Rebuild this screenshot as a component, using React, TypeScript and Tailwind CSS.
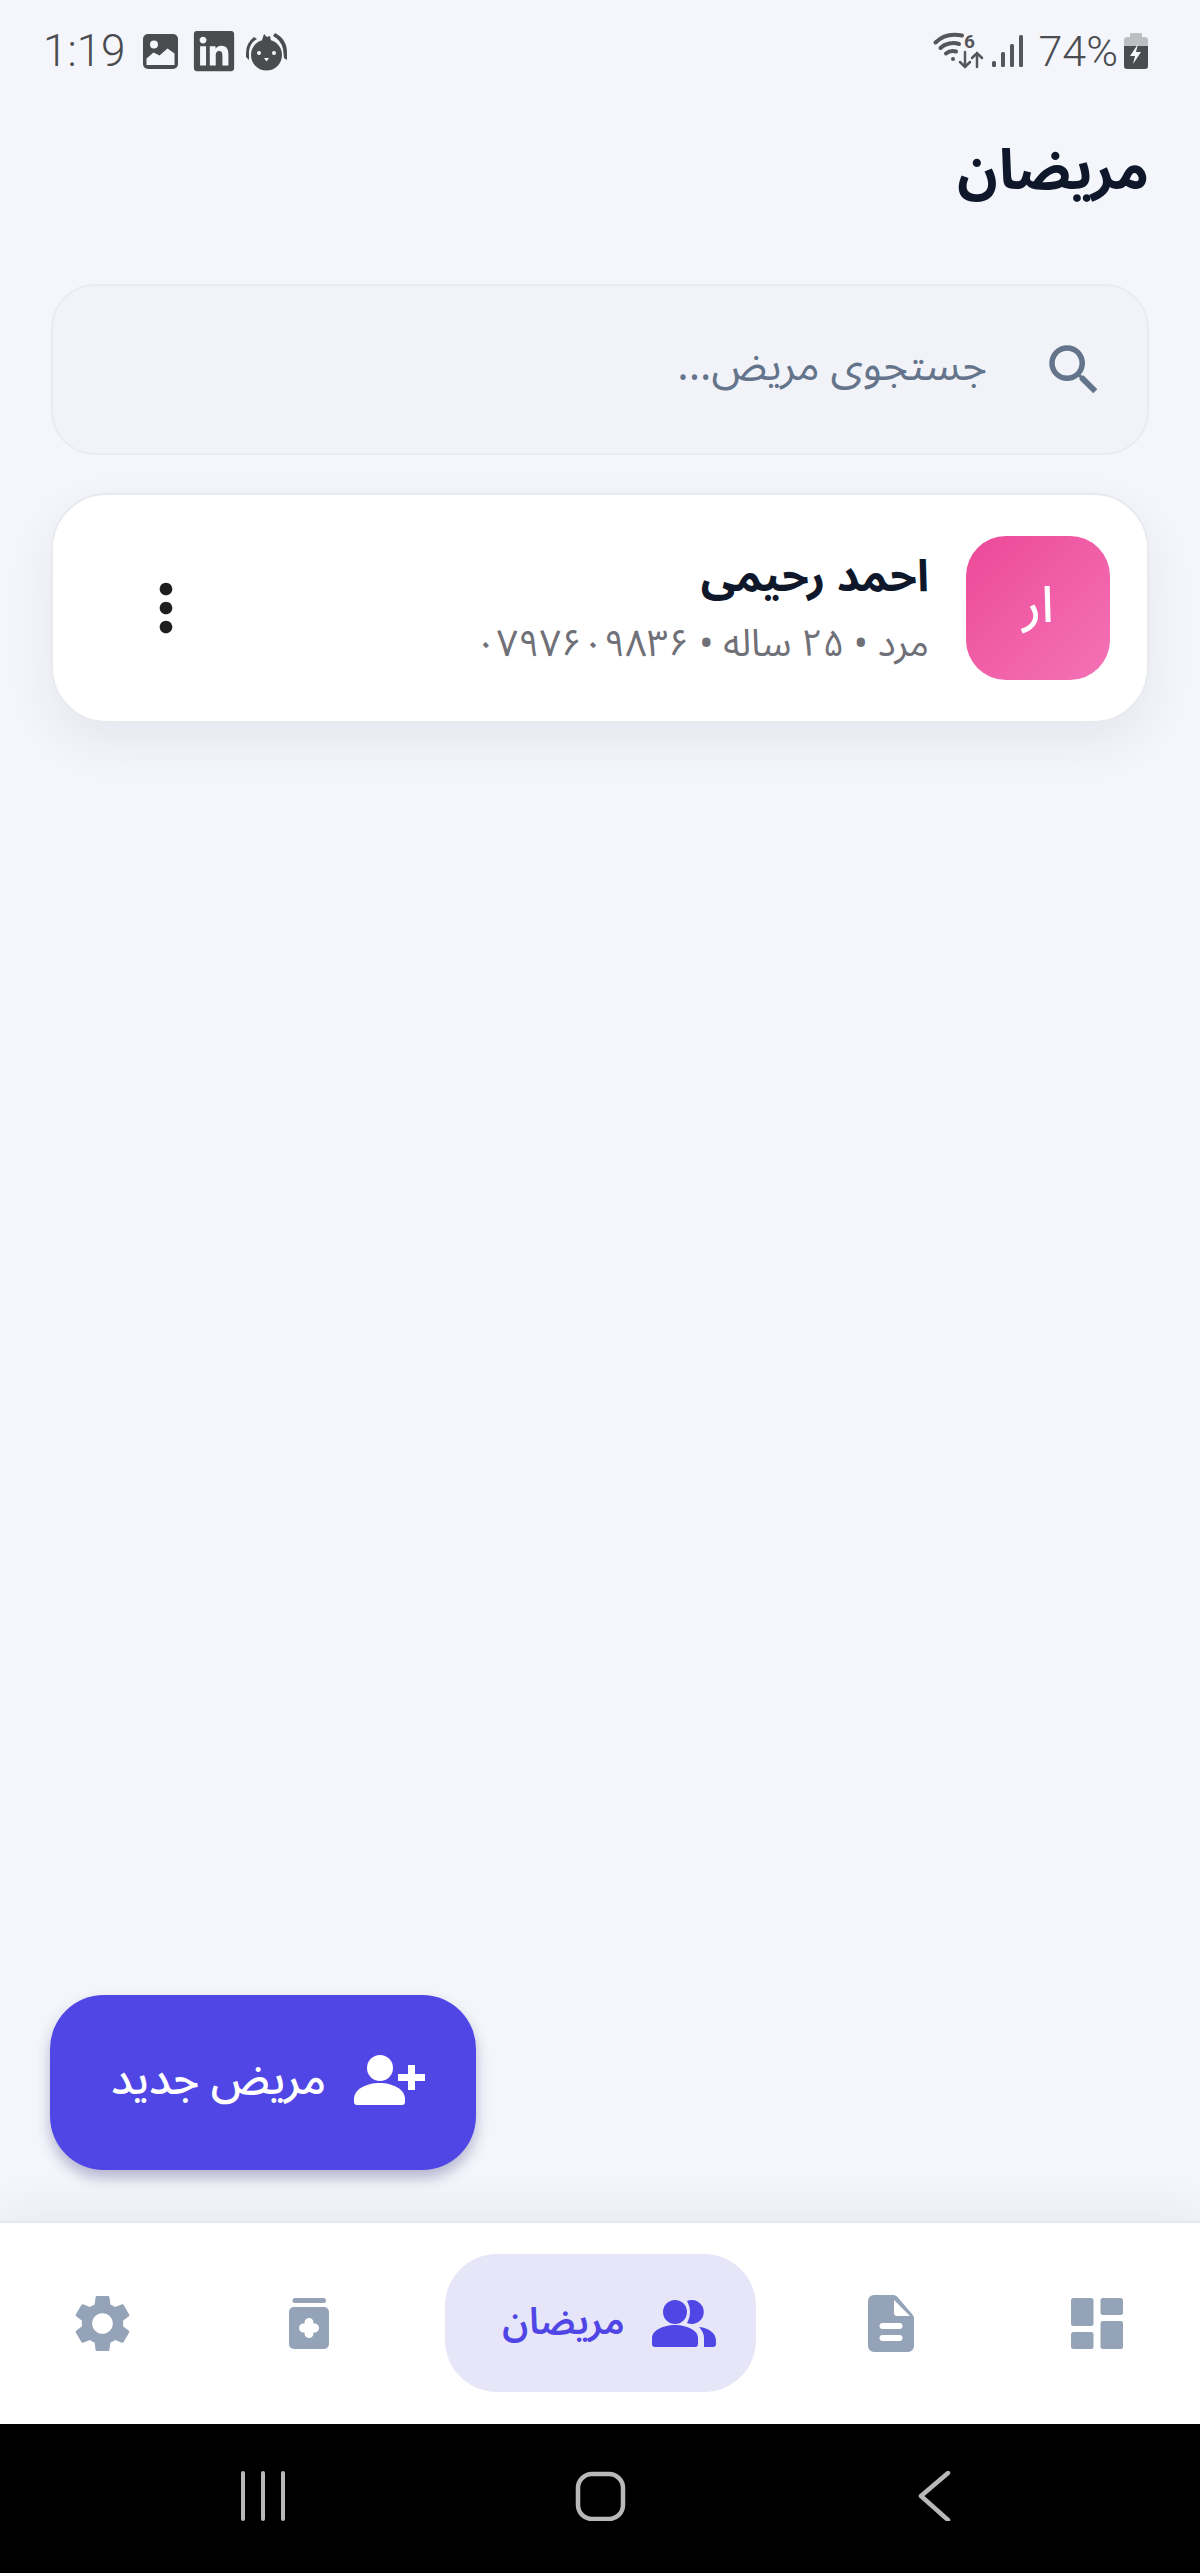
import { MdMoreVert, MdSearch, MdSettings } from 'react-icons/md'
import { FaLinkedin } from 'react-icons/fa'

function ImageNotifIcon() {
  return (
    <svg viewBox="0 0 35 35" className="h-[35px] w-[35px]" fill="#4a4c50">
      <path d="M5 0h25a5 5 0 0 1 5 5v25a5 5 0 0 1-5 5H5a5 5 0 0 1-5-5V5a5 5 0 0 1 5-5Z" />
      <circle cx="11" cy="10.5" r="4" fill="#f5f6fb" />
      <path d="M3.5 31v-6.5l7-6 6 3 8-7 7 5V31Z" fill="#f5f6fb" />
    </svg>
  )
}

function BirdIcon() {
  return (
    <svg viewBox="0 0 43 40" className="h-[40px] w-[43px]" fill="#4a4c50">
      <circle cx="21.5" cy="24" r="15.5" />
      <path d="M17 9l2-6 3 3 3-1 1 5Z" />
      <path d="M9 6 Q1 12 1 22 L1 26 L4 29 L4 20 Q5 12 12 8Z" />
      <path d="M30 2 Q42 8 42 22 L42 29 L39 27 L38 18 Q36 9 28 5Z" />
      <circle cx="14" cy="22" r="2" fill="#f5f6fb" />
      <circle cx="29" cy="22" r="2" fill="#f5f6fb" />
      <path d="M19 27h5l-2.5 3.5Z" fill="#f5f6fb" />
    </svg>
  )
}

function WifiIcon() {
  return (
    <svg viewBox="0 0 48 38" className="h-[38px] w-[48px] overflow-visible" fill="none" stroke="#55575b" strokeLinecap="round">
      <path d="M1.5 10.5C8 4 18 1.500 28 3.500" strokeWidth="4" />
      <path d="M6.500 16C11 11.500 19 10 25 12" strokeWidth="4" />
      <path d="M12 21.500C15 19 19 18.500 22 19.500" strokeWidth="4" />
      <circle cx="19" cy="27" r="2" fill="#55575b" stroke="none" />
      <text x="30" y="16" fontSize="19" fontWeight="700" fill="#55575b" stroke="none" fontFamily="Roboto, sans-serif">6</text>
      <path d="M31 20v15M26 30l5 5 5-5" strokeWidth="2.500" />
      <path d="M43 35V21M38 26l5-5 5 5" strokeWidth="2.500" />
    </svg>
  )
}

function SignalIcon() {
  return (
    <svg viewBox="0 0 32 32" className="h-[32px] w-[32px]" fill="#55575b">
      <rect x="0" y="26" width="4" height="6" rx="1.500" />
      <rect x="9" y="17" width="4" height="15" rx="1.500" />
      <rect x="18" y="9" width="4" height="23" rx="1.500" />
      <rect x="27" y="0" width="4" height="32" rx="1.500" />
    </svg>
  )
}

function BatteryIcon() {
  return (
    <svg viewBox="0 0 24 36" className="h-[36px] w-[24px]">
      <path d="M7 0h10a1 1 0 0 1 1 1v3h3a3 3 0 0 1 3 3v6H0V7a3 3 0 0 1 3-3h3V1a1 1 0 0 1 1-1Z" fill="#bdbec2" />
      <path d="M0 13h24v20a3 3 0 0 1-3 3H3a3 3 0 0 1-3-3Z" fill="#4a4c50" />
      <path d="M14 11l-8 12h5l-2 8 8-12h-5l2-8Z" fill="#f5f6fb" />
    </svg>
  )
}

function PersonPlusIcon() {
  return (
    <svg viewBox="0 0 71 50" className="h-[50px] w-[71px]" fill="white">
      <circle cx="26" cy="13" r="13" />
      <path d="M0 44c0-10 13-16 25.500-16S51 34 51 44v3a3 3 0 0 1-3 3H3a3 3 0 0 1-3-3Z" />
      <path d="M54 10h7v9h10v7H61v9h-7v-9H44v-7h10Z" />
    </svg>
  )
}

function PeopleIcon() {
  return (
    <svg viewBox="0 0 64 47" className="h-[47px] w-[64px]" fill="#4f46e5">
      <circle cx="23" cy="12" r="12" />
      <path d="M35 1A12 12 0 1 1 35 23C39 16 39 8 35 1Z" />
      <path d="M0 38C0 30 12 25 23 25S46 30 46 38V44A3 3 0 0 1 43 47H3A3 3 0 0 1 0 44Z" />
      <path d="M47 27C57 28 64 33 64 41V44A3 3 0 0 1 61 47H52V38C52 34 50 30 47 27Z" />
    </svg>
  )
}

function DashboardIcon() {
  return (
    <svg viewBox="0 0 52 51" className="h-[51px] w-[52px]" fill="#94a3b8">
      <rect x="0" y="0" width="22.500" height="28" rx="2.500" />
      <rect x="0" y="34" width="22.500" height="17" rx="2.500" />
      <rect x="29.500" y="0" width="22.500" height="17" rx="2.500" />
      <rect x="29.500" y="23" width="22.500" height="28" rx="2.500" />
    </svg>
  )
}

function DocumentIcon() {
  return (
    <svg viewBox="0 0 46 57" className="h-[57px] w-[46px]" fill="#94a3b8">
      <path d="M6 0H25C27 0 28.500 1 29.500 2L44 19C45.500 20.500 46 22 46 24V51A6 6 0 0 1 40 57H6A6 6 0 0 1 0 51V6A6 6 0 0 1 6 0Z" />
      <path d="M26 5L42 21H29A3 3 0 0 1 26 18Z" fill="white" />
      <rect x="11.500" y="28" width="23" height="6" rx="3" fill="white" />
      <rect x="11.500" y="40" width="23" height="6" rx="3" fill="white" />
    </svg>
  )
}

function MedicationIcon() {
  return (
    <svg viewBox="0 0 40 51" className="h-[51px] w-[40px]" fill="#94a3b8">
      <rect x="3.500" y="0" width="33.500" height="5" rx="2.500" />
      <rect x="0" y="9" width="40" height="42" rx="5" />
      <path d="M20 24.500v11M14.500 30h11" stroke="white" strokeWidth="9" strokeLinecap="round" />
    </svg>
  )
}

function StatusBar() {
  return (
    <div dir="ltr" className="flex h-[100px] shrink-0 items-center justify-between pl-[43px] pr-[52px] pt-[2px]">
      <div className="flex items-center">
        <span className="mr-[18px] font-['Roboto',sans-serif] text-[44px] font-light leading-none text-[#4a4c50]">1:19</span>
        <ImageNotifIcon />
        <FaLinkedin className="ml-[13px] text-[46px] text-[#4a4c50]" />
        <span className="ml-[8px]"><BirdIcon /></span>
      </div>
      <div className="flex items-center">
        <WifiIcon />
        <span className="ml-[10px]"><SignalIcon /></span>
        <span className="ml-[15px] font-['Roboto',sans-serif] text-[43px] font-light leading-none text-[#4a4c50]">74%</span>
        <span className="ml-[6px]"><BatteryIcon /></span>
      </div>
    </div>
  )
}

function PatientCard() {
  return (
    <div className="flex h-[230px] items-center rounded-[56px] border-2 border-[#e8eaf0] bg-white pl-[75px] pr-[37px] shadow-[0_20px_50px_rgba(30,41,90,0.07)]">
      <div className="flex h-[144px] w-[144px] shrink-0 items-center justify-center rounded-[40px] bg-gradient-to-br from-[#ec4899] to-[#f472b6] pb-[4px] text-[50px] font-medium text-white">
        ار
      </div>
      <div className="mr-[37px] flex-1">
        <p className="text-[44px] font-bold leading-[62px] text-[#0f172a]">احمد رحیمی</p>
        <p className="mt-[9px] text-[37.5px] leading-[54px] text-[#6f7078]">مرد • ۲۵ ساله • ۰۷۹۷۶۰۹۸۳۶</p>
      </div>
      <MdMoreVert className="shrink-0 text-[76px] text-[#1e1e1e]" />
    </div>
  )
}

function NavSlot({ children }: { children: React.ReactNode }) {
  return <div className="flex h-[72px] w-[140px] items-center justify-center text-[#94a3b8]">{children}</div>
}

function BottomNav() {
  return (
    <nav className="relative flex h-[203px] shrink-0 items-center justify-around border-t-2 border-[#e6e8f0] bg-white pb-[1px] shadow-[0_-14px_40px_rgba(30,41,90,0.05)]">
      <NavSlot><DashboardIcon /></NavSlot>
      <NavSlot><DocumentIcon /></NavSlot>
      <div className="flex h-[138px] w-[311px] items-center justify-center gap-[27px] rounded-[52px] bg-[#e7e6f9] pl-[18px] text-[#4f46e5]">
        <PeopleIcon />
        <span className="text-[37px] font-semibold">مریضان</span>
      </div>
      <NavSlot><MedicationIcon /></NavSlot>
      <NavSlot><MdSettings className="text-[69px]" /></NavSlot>
    </nav>
  )
}

function SystemNav() {
  return (
    <div className="flex h-[149px] shrink-0 items-center justify-center bg-black pb-[5px]">
      <svg viewBox="0 0 720 50" className="h-[50px] w-[720px]" fill="none" stroke="#b8b8b8" strokeLinecap="round">
        <path d="M3 2v46M23 2v46M43 2v46" strokeWidth="4" />
        <rect x="338" y="3" width="45" height="45" rx="14" strokeWidth="4.500" />
        <path d="M708 2 681 25l27 24" strokeWidth="4.500" strokeLinejoin="round" />
      </svg>
    </div>
  )
}

export default function App() {
  return (
    <div dir="rtl" className="relative flex h-screen flex-col overflow-hidden bg-[#f5f6fb] font-['Noto_Sans_Arabic','DejaVu_Sans',sans-serif]">
      <StatusBar />
      <main className="flex-1 px-[51px]">
        <h1 className="h-[184px] pt-[29px] text-[56px] font-bold leading-[84px] text-[#0f172a]">مریضان</h1>
        <div className="flex h-[171px] items-center rounded-[44px] border-2 border-[#e9ebf1] bg-[#f1f3f9] pr-[40px]">
          <MdSearch className="shrink-0 text-[66px] text-[#64748b]" />
          <span className="mr-[54px] pb-[6px] text-[42.5px] text-[#64748b]">جستجوی مریض...</span>
        </div>
        <div className="mt-[38px]">
          <PatientCard />
        </div>
      </main>
      <button
        type="button"
        className="absolute bottom-[403px] left-[50px] flex h-[175px] w-[426px] items-center justify-center gap-[28px] rounded-[54px] bg-[#4f46e5] pb-[6px] pl-[10px] text-[44px] font-medium text-white shadow-[0_8px_14px_rgba(30,27,110,0.3)]"
      >
        <PersonPlusIcon />
        <span>مریض جدید</span>
      </button>
      <BottomNav />
      <SystemNav />
    </div>
  )
}
